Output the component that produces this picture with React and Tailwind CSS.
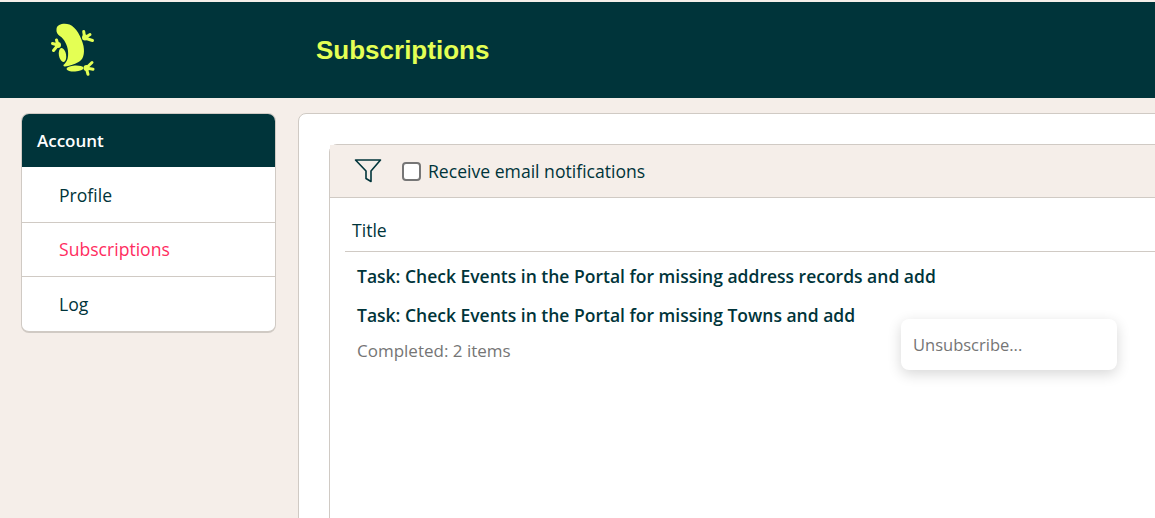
import React from "react";

const Frog = () => (
  <svg width="50" height="60" viewBox="48 20 50 60" fill="#e4ff54">
    <path d="M56.500 29 C57 24 64 23 69.500 24.500 C76 27 81.500 37 83.500 46 C85 54 83 60 78.500 62 C74 64.500 69 66 65 66.500 C63 66.500 63 65 64.500 64 C67.500 61 68.500 57 68 51 C67.500 45 64 39 60.500 36.500 C57.500 34.500 56 32 56.500 29 Z" />
    <ellipse cx="62.500" cy="55" rx="3.600" ry="7" transform="rotate(-10 62.500 55)" />
    <ellipse cx="75" cy="68.500" rx="8.500" ry="3" transform="rotate(-3 75 68.500)" />
    <g stroke="#e4ff54" strokeWidth="3" strokeLinecap="round" fill="none">
      <path d="M83.700 31.500 L84.700 38 M90 34.500 L84.700 38 M92.500 40.500 L84.700 38" />
      <path d="M56.500 40 L58 45 M52.500 43.500 L58 45 M53.500 50.500 L58 45" />
      <path d="M92 62.500 L86.300 68 M93 69.300 L86.300 68 M88 74.300 L86.300 68" />
    </g>
    <circle cx="85" cy="37.500" r="3" />
    <circle cx="58" cy="45" r="3" />
    <circle cx="86.500" cy="68" r="3" />
  </svg>
);

const Funnel = () => (
  <svg width="28" height="26" viewBox="0 0 28 26" fill="none" stroke="#00343a" strokeWidth="1.600" strokeLinejoin="round">
    <path d="M1.500 2 H26.500 L17 13 V23.500 L12 20.500 V13 Z" />
  </svg>
);

const menuItems = [
  { label: "Profile", active: false, rowClass: "h-[55px] pt-[2px]" },
  { label: "Subscriptions", active: true, rowClass: "h-[55px] border-y border-[#d0cac4]" },
  { label: "Log", active: false, rowClass: "h-[54px]" },
];

export default function App() {
  return (
    <div className="h-[518px] w-[1155px] overflow-hidden bg-[#f5eee9] pt-[2px] font-['Open_Sans','Noto_Sans',sans-serif] text-[#00343a]">
      {/* Header */}
      <div className="flex h-[96px] items-center bg-[#00343a]">
        <div className="ml-[48px] flex w-[268px] shrink-0">
          <Frog />
        </div>
        <h1 className="font-['Liberation_Sans',sans-serif] text-[26px] font-bold text-[#e4ff54]">
          Subscriptions
        </h1>
      </div>

      <div className="flex items-start pl-[21px] pt-[15px]">
        {/* Sidebar */}
        <div className="w-[255px] shrink-0 overflow-hidden rounded-lg border border-b-2 border-[#d0cac4] bg-white">
          <div className="flex h-[53px] items-center bg-[#00343a] pl-[15px] text-[17px] font-semibold text-white">
            Account
          </div>
          {menuItems.map((item) => (
            <div
              key={item.label}
              className={`flex items-center pl-[37px] text-[17.6px] ${item.rowClass} ${
                item.active ? "text-[#ff2d5f]" : "text-[#00343a]"
              }`}
            >
              {item.label}
            </div>
          ))}
        </div>

        {/* Main card */}
        <div className="relative ml-[22px] h-[420px] w-[900px] shrink-0 rounded-l-lg border border-[#d0cac4] bg-white pl-[30px] pt-[30px]">
          <div className="h-[400px] rounded-tl-lg border border-[#d0cac4]">
            <div className="flex h-[53px] items-center border-b border-[#d0cac4] bg-[#f5eee9] pl-[24px]">
              <Funnel />
              <span className="ml-[20px] h-[19px] w-[19px] rounded-[4px] border-2 border-[#767676] bg-white" />
              <span className="ml-[7px] text-[17.6px]">Receive email notifications</span>
            </div>
            <div className="ml-[15px] flex h-[54px] items-center border-b border-[#d0cac4] pl-[7px] pt-[11px] text-[17.6px]">
              Title
            </div>
            <div className="pl-[27px] text-[17.5px] font-semibold">
              <div className="flex h-[36px] items-center pt-[13px]">
                Task: Check Events in the Portal for missing address records and add
              </div>
              <div className="flex h-[41px] items-center pt-[14px]">
                Task: Check Events in the Portal for missing Towns and add
              </div>
              <div className="pt-[9px] text-[17px] font-normal text-[#757575]">Completed: 2 items</div>
            </div>
          </div>

          {/* Context popup */}
          <div className="absolute left-[602px] top-[205px] flex h-[51px] w-[216px] items-center rounded-lg bg-white pl-[12px] pt-[1px] text-[16.5px] text-[#757575] shadow-[0_4px_14px_rgba(0,0,0,0.16)]">
            Unsubscribe...
          </div>
        </div>
      </div>
    </div>
  );
}
